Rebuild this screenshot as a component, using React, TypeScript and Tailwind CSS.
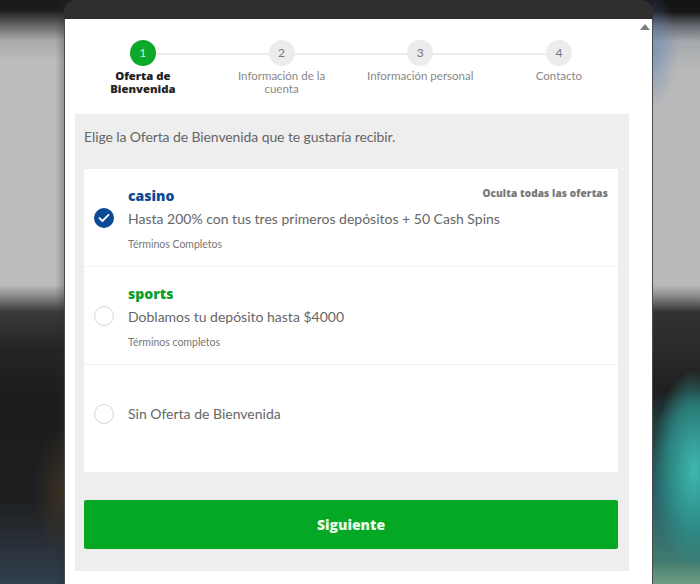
const steps = [
  { n: "1", label: "Oferta de Bienvenida", active: true },
  { n: "2", label: "Información de la cuenta", active: false },
  { n: "3", label: "Información personal", active: false },
  { n: "4", label: "Contacto", active: false },
];

function Radio({ checked }: { checked?: boolean }) {
  if (checked) {
    return (
      <span className="flex h-5 w-5 shrink-0 items-center justify-center rounded-full bg-[#0b4a94]">
        <svg width="12" height="10" viewBox="0 0 12 10" fill="none">
          <path d="M1.5 5.2 4.4 8 10.5 1.8" stroke="#fff" strokeWidth="1.8" strokeLinecap="round" strokeLinejoin="round" />
        </svg>
      </span>
    );
  }
  return <span className="h-5 w-5 shrink-0 rounded-full border border-[#d6d6d6] bg-white" />;
}

export default function App() {
  return (
    <div className="relative h-[584px] w-[700px] overflow-hidden bg-[#1c1c1c] font-['Lato','Noto_Sans',sans-serif]">
      {/* blurred page behind the dialog */}
      <div className="absolute left-0 top-0 h-[584px] w-[65px] bg-[radial-gradient(ellipse_28px_65px_at_62px_490px,rgba(75,60,38,0.6),transparent),linear-gradient(90deg,transparent_85%,rgba(40,40,40,0.3)_100%),linear-gradient(180deg,#181818_0,#1b1b1b_10px,#5f5f5f_24px,#a8a8a8_40px,#bcbcbc_60px,#bcbcbc_285px,#8a8a8a_296px,#3a3a3a_312px,#242424_350px,#1b1c1d_400px,#1e1f20_500px,#2a3038_545px,#30404f_584px)]" />
      <div className="absolute right-0 top-0 h-[584px] w-[48px] bg-[radial-gradient(ellipse_26px_60px_at_0_50px,rgba(95,130,185,0.6),transparent),radial-gradient(ellipse_42px_100px_at_42px_470px,rgba(62,190,180,0.95),rgba(45,140,135,0.8)_65%,transparent),linear-gradient(180deg,#141414_0,#161616_12px,#666a70_26px,#a5a8ac_42px,#b9b9b9_70px,#b9b9b9_285px,#8a8a8a_296px,#333333_312px,#2b2b2b_345px,#1f1f1f_390px,#1f3a3c_420px,#2a5f66_500px,#3f7a70_560px,#6f9c80_584px)]" />
      <div className="absolute left-[64px] top-0 h-[584px] w-[589px] rounded-t-[12px] bg-[#2f2f2f]">
        <div className="mt-[19px] h-[565px] border-x border-[#4a4a4a] bg-white pl-[10px] pt-[21px]">
          <span className="absolute right-[3px] top-[24px] h-0 w-0 border-x-[5px] border-b-[6px] border-x-transparent border-b-[#7d7d7d]" />
          {/* stepper */}
          <div className="relative -ml-[1.5px] flex w-[556px]">
            <div className="absolute left-[69px] top-[13px] h-[2px] w-[416px] bg-[#eeeeee]" />
            {steps.map((s) => (
              <div key={s.n} className="relative flex w-[138.7px] flex-col items-center">
                <span
                  className={
                    s.active
                      ? "flex h-[26px] w-[26px] items-center justify-center rounded-full bg-[#0ba82a] text-xs text-[#c5efcc]"
                      : "flex h-[26px] w-[26px] items-center justify-center rounded-full bg-[#ececec] text-xs text-[#777]"
                  }
                >
                  {s.n}
                </span>
                <span
                  className={
                    s.active
                      ? "mt-[3px] w-[90px] text-center font-['Open_Sans'] text-[11.3px] leading-[13px] font-extrabold text-[#222]"
                      : "mt-[3px] w-[120px] text-center text-[11.5px] leading-[13px] text-[#888]"
                  }
                >
                  {s.label}
                </span>
              </div>
            ))}
          </div>
          {/* panel */}
          <div className="mt-[19px] h-[457px] w-[554px] bg-[#eeeeee] px-[9px]">
            <p className="h-[55px] pt-[12px] text-sm leading-[22px] tracking-[-0.1px] text-[#666]">
              Elige la Oferta de Bienvenida que te gustaría recibir.
            </p>
            <div className="h-[303px] w-[534px] bg-white">
              <div className="relative flex h-[98px] items-center gap-[14px] border-b border-[#f3f3f3] pl-[10px]">
                <Radio checked />
                <div className="flex flex-col self-start pt-[17px]">
                  <span className="font-['Open_Sans'] text-sm leading-[20px] font-extrabold text-[#0b4a94]">casino</span>
                  <span className="mt-[3px] text-sm leading-[20px] text-[#666]">
                    Hasta 200% con tus tres primeros depósitos + 50 Cash Spins
                  </span>
                  <span className="mt-[7px] text-[10.5px] leading-[16px] text-[#777]">Términos Completos</span>
                </div>
                <span className="absolute right-[10px] top-[17px] font-['Open_Sans'] text-[10px] leading-[14px] font-extrabold tracking-[0.12px] text-[#777]">
                  Oculta todas las ofertas
                </span>
              </div>
              <div className="flex h-[98px] items-center gap-[14px] border-b border-[#f3f3f3] pl-[10px]">
                <Radio />
                <div className="flex flex-col self-start pt-[17px]">
                  <span className="font-['Open_Sans'] text-sm leading-[20px] font-extrabold text-[#0ba02c]">sports</span>
                  <span className="mt-[3px] text-sm leading-[20px] text-[#666]">Doblamos tu depósito hasta $4000</span>
                  <span className="mt-[7px] text-[10.5px] leading-[16px] text-[#777]">Términos completos</span>
                </div>
              </div>
              <div className="flex h-[98px] items-center gap-[14px] pl-[10px]">
                <Radio />
                <span className="text-sm leading-[20px] text-[#666]">Sin Oferta de Bienvenida</span>
              </div>
            </div>
            <button className="mt-[28px] flex h-[49px] w-[534px] items-center justify-center rounded-[2px] bg-[#04a825] font-['Open_Sans'] text-sm font-extrabold text-[#eafbe9]">
              Siguiente
            </button>
          </div>
        </div>
      </div>
    </div>
  );
}
